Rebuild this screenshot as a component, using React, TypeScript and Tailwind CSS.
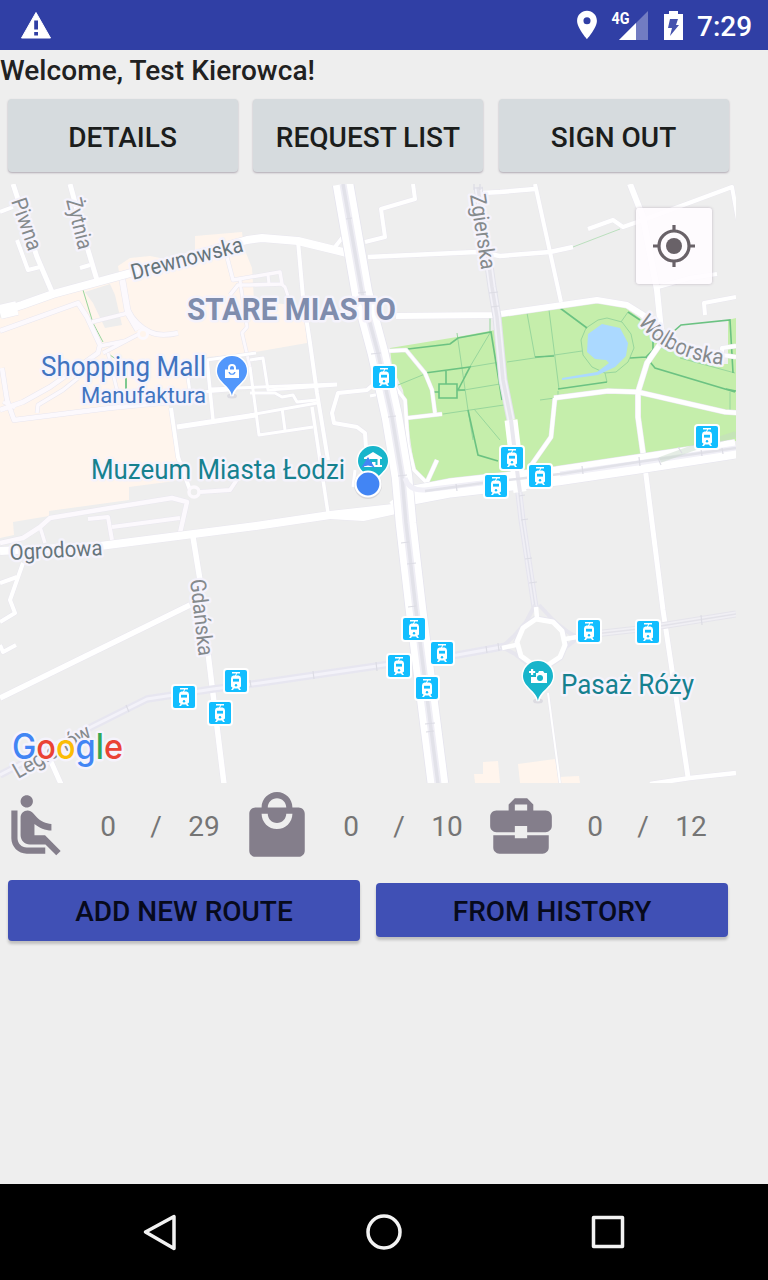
import React from "react";
import {
  MdAirlineSeatReclineNormal,
  MdBusinessCenter,
  MdLocalMall,
  MdLocationOn,
} from "react-icons/md";

const ROADS: [string, number][] = [
  // north-west
  ["M0 312L22 305L53 294L127 274L247 240L262 238L298 241L347 253", 8],
  ["M0 312L17 308", 14],
  ["M13 184L37 257L52 292", 5],
  ["M0 212L13 207", 4],
  ["M17 240L28 270L40 267", 4],
  ["M70 184L88 250L97 280", 5],
  ["M80 268L90 265", 4],
  // centre
  ["M335 247L346 233", 4],
  ["M413 184L415 199L381 209L385 237L365 242", 4],
  ["M298 241L303 297L310 343L317 393L328 460", 4],
  ["M312 407L320 460L328 513", 3.5],
  ["M368 257L477 252L500 256L550 252L573 247", 4.5],
  ["M482 193L500 192L535 189", 4.5],
  ["M535 184L550 252L561 302", 4],
  ["M396 316L493 315L500 314L597 300L627 305L643 315L663 334", 6],
  ["M630 184L643 217L657 290L662 340", 6],
  ["M588 229L613 220L623 227L643 220L732 187L738 220", 4],
  ["M658 287L690 278L717 274", 4],
  ["M705 315L704 303L736 297", 4],
  ["M736 346L722 348L722 355L736 357", 4],
  // blocks
  ["M207 360L256 353", 3],
  ["M250 360L263 358L268 390L337 385", 3],
  ["M188 378L190 393L228 390L230 378", 3],
  ["M207 360L213 420", 3.5],
  ["M210 389L337 384", 3],
  ["M250 367L259 435L313 427", 3],
  ["M177 427L256 415", 5],
  ["M250 415L317 403", 3],
  ["M250 393L275 393L282 397L293 395L297 402L317 400", 3],
  ["M282 408L285 430", 3],
  ["M171 408L178 457L190 490", 4],
  ["M373 385L367 390L338 393L332 413L334 423L357 427L365 433L366 448", 4],
  ["M370 396L380 394", 3],
  ["M355 470L353 487", 3],
  // south-west
  ["M0 551L100 546L256 526L330 515L393 508", 8],
  ["M330 515L363 517L400 509", 8],
  ["M193 537L200 580L208 653L224 784", 5.5],
  ["M0 698L190 605", 5.5],
  ["M23 563L10 600L15 613L0 622", 4],
  ["M0 583L17 577", 4],
  ["M0 645L3 652L16 645", 4],
  ["M48 755L61 784", 5],
  // south-east
  ["M645 467L663 610L688 777", 5],
  ["M650 784L690 778L736 773", 4.5],
  ["M548 693L560 783", 2],
];

const MALL_ROADS: [string, number][] = [
  ["M0 331L78 303L87 317L100 345L98 353L50 387L23 402L0 410", 4.5],
  ["M2 368L7 400L14 420L110 408L171 402", 4.5],
  ["M37 413L38 405L63 390L78 378", 3.5],
  ["M3 402L15 408", 3],
  ["M122 278L128 313L138 330", 6],
  ["M92 322L128 313", 3.5],
  ["M100 346L125 341L139 334L103 353", 3.5],
  ["M128 310Q135 325 150 332Q160 337 178 333", 4.5],
  ["M108 353L117 390", 3],
  ["M227 257L233 280L280 272L282 284L250 285L238 285L230 295", 3.5],
  ["M240 279L241 288L247 327L242 333L250 367", 3],
  ["M268 275L269 284", 3],
  ["M280 283L285 287L288 296", 3],
  ["M200 492L230 490L238 478", 4],
  ["M0 543L23 538L40 527L50 518L110 508L172 498L187 502L180 533", 4.5],
  ["M88 519L108 517L112 540", 4],
  ["M112 527L180 518", 4],
  ["M40 527L45 543", 3.5],
];

const PARK_ROADS: [string, number][] = [
  ["M388 351L406 350L425 373L432 390L435 413", 3.5],
  ["M407 418L442 414", 3.5],
  ["M427 482L437 460", 4],
  ["M396 388L405 400L408 445L414 470L427 483", 3.5],
  ["M554 398L608 391L638 392L690 404L725 412L738 413", 4.5],
  ["M555 398L551 437L530 467", 4],
  ["M638 470L645 467L638 417L638 392L647 363L663 340", 5],
];

const STOPS: [number, number][] = [
  [384, 377], [512, 458], [496, 486], [540, 476], [707, 437], [414, 629], [442, 653],
  [399, 666], [427, 688], [236, 681], [184, 697], [220, 713], [589, 631], [648, 632],
];

const MAIN = "M343 184L362 293L378 353L392 417L402 477L406 523L416 610L438 784";
const CROSS = "M408 496L450 488L557 476L638 464L736 449";
const ZGIERSKA_N = "M478 187L492 287L497 317L503 380L511 420";
const ZGIERSKA_S = "M518 485L522 520L535 607";
const LEG_W = "M0 775L93 726L147 699L213 689L260 683L377 666L417 660L457 655L507 646";
const LEG_E = "M570 638L603 633L648 628L736 614";

function TramStop({ x, y }: { x: number; y: number }) {
  return (
    <g transform={`translate(${x} ${y})`}>
      <rect x="-13" y="-13" width="26" height="26" rx="4" fill="#fff" />
      <rect x="-11" y="-11" width="22" height="22" rx="2" fill="#12beff" />
      <path d="M-4 -9H4V-7.6H1.3L0 -5.6H2.6Q5 -5.2 5 -2.5V5.5L3.4 6.8L5 9H3L2 7.6H-2L-3 9H-5L-3.4 6.8L-5 5.5V-2.5Q-5 -5.2 -2.6 -5.6H-1L0.2 -7.6H-4Z" fill="#fff" />
      <rect x="-3" y="-2.2" width="6" height="2.800" fill="#12beff" />
      <circle cx="0" cy="4.2" r="1.2" fill="#12beff" />
    </g>
  );
}

function Pin({ x, y, fill, children }: { x: number; y: number; fill: string; children?: React.ReactNode }) {
  return (
    <g transform={`translate(${x} ${y})`}>
      <ellipse cx="0" cy="25" rx="5" ry="2.500" fill="#d0ced8" opacity=".6" />
      <path d="M0 25C-1 15 -15 11 -15 0A15 15 0 1 1 15 0C15 11 1 15 0 25Z" fill={fill} stroke="#fff" strokeWidth="3" paintOrder="stroke" />
      {children}
    </g>
  );
}

function Roads({ list, color }: { list: [string, number][]; color: string }) {
  return (
    <>
      {list.map(([d, w], i) => (
        <path key={`e${i}`} d={d} stroke="#e9e7ef" strokeWidth={w + 1} />
      ))}
      {list.map(([d, w], i) => (
        <path key={i} d={d} stroke={color} strokeWidth={w} />
      ))}
    </>
  );
}

function CityMap() {
  return (
    <svg viewBox="0 184 736 599" className="block h-[599px] w-[736px]" fontFamily="Roboto, sans-serif">
      <rect y="184" width="736" height="599" fill="#eeeeee" />
      <g fill="#fff5ed">
        <path d="M0 318L50 298L120 278L118 266L130 258L150 256L165 259L195 252V236L242 232L244 248L252 268L254 300L290 305L305 323L307 343L250 353L207 357L208 372L188 374V400L168 402L178 457L188 478L167 482L129 487V500L49 511V516L13 522L14 535L0 538Z" />
        <path d="M474 774H483V762L498 761L500 783H475ZM518 764L555 759L558 777L579 776L580 783H520Z" />
      </g>
      <path d="M85 292L110 284L115 295L122 325L105 328L93 303ZM208 360L250 354L254 390L210 396Z" fill="#ededed" />
      <path d="M390 348L457 337L495 330L502 315L597 301L623 306L648 324L663 342L690 358L712 364L728 364V320L736 318V441L553 468L427 483L415 473L408 423L403 390L392 367Z" fill="#c5eeab" />
      <g fill="none" stroke="#98d69c" strokeWidth="1">
        <path d="M457 333L468 410L473 440M490 333L465 375M490 318V333M398 385L425 374M470 367L500 362M458 391L500 384M443 414L504 405M474 409L500 440M507 362L582 351M527 313L535 357M549 310L559 389M540 400L555 398M605 373L607 382M621 322L628 312M680 358L735 373M558 397V391M730 392V410" />
        <path d="M598 320L607 318L622 322L631 334L634 348L628 362L616 372L605 373L592 367L583 355L581 340L586 328Z" />
        <path d="M573 247L620 229" opacity=".6" />
        <path d="M83 290L93 323L103 342M110 355Q122 362 126 373V390" />
      </g>
      <path d="M126 378V389M408 349L450 344L458 338L491 332L502 400M425 373L470 367L458 390M439 384H457V398H439ZM446 370V384M457 390H465M434 392H439M468 410L478 455L498 461M560 308L587 328M628 312L640 320M673 332L681 325L730 320L733 373M630 358L646 357L653 350V338M646 357L655 368L735 392M558 389L607 382M535 357L554 356M726 389L736 391" fill="none" stroke="#6bc282" strokeWidth="1.6" />
      <path d="M602 324L620 328L628 343L626 356L615 367L598 375L562 380V378L597 372L609 363L606 360L595 359L587 352L588 334Z" fill="#abd9ff" />

      <g fill="none" strokeLinejoin="round">
        <Roads list={MALL_ROADS} color="#fcf9fd" />
        <Roads list={ROADS} color="#fff" />
        <circle cx="143" cy="334" r="4.5" stroke="#fcf9fd" strokeWidth="3" fill="#fff5ed" />
        <circle cx="194" cy="492" r="5" stroke="#fcf9fd" strokeWidth="3.5" fill="#eee" />
        <Roads list={PARK_ROADS} color="#fff" />

        <path d={LEG_W} stroke="#e7e6f0" strokeWidth="7.500" />
        <path d={LEG_W} stroke="#f3f2f9" strokeWidth="3" />
        <path d={LEG_E} stroke="#e5e4eb" strokeWidth="7" />
        <path d={LEG_E} stroke="#f0eff4" strokeWidth="5" />
        <path d={LEG_E} stroke="#e3e2e9" strokeWidth="1.4" />
        <path d={ZGIERSKA_N} stroke="#e2e2ea" strokeWidth="9" />
        <path d={ZGIERSKA_N} stroke="#f3f2f8" strokeWidth="7" />
        <path d={ZGIERSKA_N} stroke="#e5e4eb" strokeWidth="3.5" />
        <path d={ZGIERSKA_S} stroke="#e5e4ee" strokeWidth="7" />
        <path d={ZGIERSKA_S} stroke="#f0eff5" strokeWidth="5" />
        <path d={ZGIERSKA_S} stroke="#e2e2eb" strokeWidth="1.4" />

        <path d="M393 507L408 496M398 518L410 510" stroke="#fff" strokeWidth="12" />
        <path d={CROSS} stroke="#e5e4ee" strokeWidth="20" />
        <path d={CROSS} stroke="#fff" strokeWidth="19" />
        <path d={MAIN} stroke="#e5e4ee" strokeWidth="22" />
        <path d={MAIN} stroke="#fff" strokeWidth="20.5" />
        <path d="M511 420L514 445L518 478L520 492" stroke="#fff" strokeWidth="13" />
        <path d="M511 420L514 445L518 478L520 492" stroke="#e9e8ef" strokeWidth="4" />
        <path d={MAIN} stroke="#efeef5" strokeWidth="7" />
        <path d={MAIN} stroke="#e2e2e9" strokeWidth="3.5" />
        <path d="M405 478Q409 491 425 490L490 482M560 474L638 463L736 448" stroke="#f1f0f7" strokeWidth="5" />
        <path d="M425 491L490 482L560 474L638 462L736 448" stroke="#e2e2e9" strokeWidth="2.6" />
        <path d="M660 460L690 449L736 434" stroke="#c5d8c6" strokeWidth="6" opacity=".45" />
        <path d="M346 219L352 218M358 293L366 292M371 354L381 353M388 417L396 416M398 476L407 475M401 543L409 542M407 564L416 563M408 607L416 606M425 724L435 723M426 732L434 731M456 484L457 491M582 466L583 474M639 457L640 466M658 458L661 465M678 447L682 453M701 449L702 456M722 448L723 454M489 293L498 292M491 307L499 306M519 496L525 495M521 520L528 519M525 559L532 558M529 583L537 582M126 705L129 712M313 671L314 679M376 662L377 671M250 680L251 687M486 646L487 653M498 643L499 651M701 615L702 625M474 188H483M474 184V190M480 184V190" stroke="#dcdce4" strokeWidth="1.2" />

        <path d="M535 605L526 622L514 636L502 647L515 654L530 666M539 605L555 622L568 632L578 638L565 648L553 662" stroke="#e7e6ee" strokeWidth="4" />
        <path d="M536 619L553 622L562 631L565 645L560 657L548 665L532 664L521 656L517 642L523 628Z" stroke="#e7e6ee" strokeWidth="7" />
        <path d="M536 619L553 622L562 631L565 645L560 657L548 665L532 664L521 656L517 642L523 628Z" stroke="#fff" strokeWidth="5" fill="#eee" />
        <path d="M536 607L537 618M502 648L516 645M565 639L577 637" stroke="#fff" strokeWidth="4.5" />
      </g>

      {STOPS.map(([x, y]) => (
        <TramStop key={`${x}-${y}`} x={x} y={y} />
      ))}

      <Pin x={232} y={371} fill="#5297fb">
        <path d="M-7 -1.5H-4V-3A4 4 0 0 1 4 -3V-1.5H7V7H-7Z" fill="#fff" />
        <path d="M-2 -1.5V-3A2 2 0 0 1 2 -3V-1.5ZM-3.6 1H-2.2A2.3 2.3 0 0 0 2.2 1H3.6A3.7 3.7 0 0 1 -3.6 1Z" fill="#5297fb" />
      </Pin>
      <Pin x={373} y={461} fill="#18b5cb">
        <path d="M0 -9L9 -3.5V-2H7V4H9V6H-9V4H-6V-2H-9V-3.5Z" fill="#fff" />
        <path d="M-3.5 -2H4.5V4H2.5V1H-1V4H-3.5Z" fill="#18b5cb" />
      </Pin>
      <path d="M361 468Q368 463 375 468L368 457Z" fill="#4285f4" />
      <circle cx="368" cy="485" r="14" fill="#8d8a98" opacity=".22" />
      <circle cx="368" cy="484" r="12.500" fill="#4285f4" stroke="#fff" strokeWidth="2.2" />
      <Pin x={538} y={676} fill="#18b5cb">
        <path d="M-7 1H-2V-3H0L1 -5H5L6.500 -3H9V7H-7Z" fill="#fff" />
        <circle cx="2" cy="2" r="3" fill="#18b5cb" />
        <path d="M-7 -7H-4.800V-5H-2.800V-3H-4.800V-1H-7V-3H-9V-5H-7Z" fill="#fff" />
      </Pin>

      <g paintOrder="stroke" stroke="#f5f3fc" strokeWidth="5" strokeLinejoin="round">
        <g fill="#858a8d" fontSize="22">
          <text transform="translate(11 201) rotate(71)" textLength="54" lengthAdjust="spacingAndGlyphs">Piwna</text>
          <text transform="translate(66 200) rotate(76)" textLength="52" lengthAdjust="spacingAndGlyphs">Żytnia</text>
          <text transform="translate(470 195) rotate(81.500)" textLength="76" lengthAdjust="spacingAndGlyphs">Zgierska</text>
          <text transform="translate(190 580) rotate(83.500)" textLength="77" lengthAdjust="spacingAndGlyphs">Gdańska</text>
          <path id="wolborska" d="M638 322C650 341 680 361 726 365" fill="none" stroke="none" />
          <text textLength="98" lengthAdjust="spacingAndGlyphs">
            <textPath href="#wolborska">Wolborska</textPath>
          </text>
          <text transform="translate(18 779) rotate(-29.500)" textLength="86" lengthAdjust="spacingAndGlyphs">Legionów</text>
        </g>
        <g fill="#66757b" fontSize="22">
          <text transform="translate(133 280) rotate(-14.500)" textLength="115" lengthAdjust="spacingAndGlyphs">Drewnowska</text>
          <text transform="translate(10 560) rotate(-3)" textLength="93" lengthAdjust="spacingAndGlyphs">Ogrodowa</text>
        </g>
        <text x="187" y="320" fontSize="31" fontWeight="700" fill="#7f8dad" textLength="209" lengthAdjust="spacingAndGlyphs">STARE MIASTO</text>
        <g fill="#4174c0">
          <text x="41" y="376" fontSize="27" textLength="165" lengthAdjust="spacingAndGlyphs">Shopping Mall</text>
          <text x="81" y="403" fontSize="22" textLength="125" lengthAdjust="spacingAndGlyphs">Manufaktura</text>
        </g>
        <g fill="#16818f" fontSize="27">
          <text x="91" y="479" textLength="254" lengthAdjust="spacingAndGlyphs">Muzeum Miasta Łodzi</text>
          <text x="561" y="694" textLength="133" lengthAdjust="spacingAndGlyphs">Pasaż Róży</text>
        </g>
        <text x="12" y="759" fontFamily="Inter, sans-serif" fontSize="35" fontWeight="500" textLength="111" lengthAdjust="spacingAndGlyphs">
          <tspan fill="#4285f4">G</tspan>
          <tspan fill="#ea4335">o</tspan>
          <tspan fill="#fbbc05">o</tspan>
          <tspan fill="#4285f4">g</tspan>
          <tspan fill="#34a853">l</tspan>
          <tspan fill="#ea4335">e</tspan>
        </text>
      </g>
    </svg>
  );
}

function StatusBar() {
  return (
    <header className="flex h-[50px] shrink-0 items-center bg-[#303fa5] pr-[16px] pl-[20px] text-white">
      <svg viewBox="0 0 32 28" className="h-[28px] w-[32px]">
        <path d="M16 1.500L30.500 27H1.500Z" fill="#fff" stroke="#fff" strokeLinejoin="round" />
        <path d="M14.200 9.500H18V18.500H14.200ZM14.200 21H18V24.500H14.200Z" fill="#303fa5" />
      </svg>
      <div className="ml-auto flex items-center">
        <MdLocationOn className="size-[34px]" />
        <svg viewBox="0 0 40 34" className="ml-[6px] h-[34px] w-[40px]">
          <path d="M38 3V32H9Z" fill="#fff" opacity=".32" />
          <path d="M26 15V32H9Z" fill="#fff" />
          <text x="1.500" y="15.500" fill="#fff" fontFamily="Roboto, sans-serif" fontWeight="700" fontSize="16.500" textLength="18" lengthAdjust="spacingAndGlyphs">4G</text>
        </svg>
        <svg viewBox="0 0 19 29" className="ml-[14px] h-[29px] w-[19px]">
          <path d="M5 0H14V3H19V29H0V3H5Z" fill="#fff" />
          <path d="M6 8H14L12 14H15L6 25L8 17H4Z" fill="#4553ae" />
        </svg>
        <span className="ml-[14px] w-[55px] pt-[3px] text-[28px] leading-[33px] font-medium">7:29</span>
      </div>
    </header>
  );
}

const COUNTERS = [
  { Icon: MdAirlineSeatReclineNormal, used: 0, total: 29, icon: "-ml-px mr-[12px]", digits: "-ml-px" },
  { Icon: MdLocalMall, used: 0, total: 10, icon: "-ml-[2px] mr-[13px]", digits: "" },
  { Icon: MdBusinessCenter, used: 0, total: 12, icon: "mr-[13px]", digits: "" },
];

export default function App() {
  return (
    <div className="flex h-[1280px] w-[768px] flex-col overflow-hidden bg-[#eeeeee] font-['Roboto',sans-serif]">
      <StatusBar />
      <main className="flex flex-1 flex-col">
        <h1 className="h-[49px] pt-[4px] text-[28px] leading-[33px] font-medium tracking-[0.07px] text-[#212121]">Welcome, Test Kierowca!</h1>
        <div className="flex gap-[15.5px] pl-[7.5px]">
          {["DETAILS", "REQUEST LIST", "SIGN OUT"].map((label) => (
            <button key={label} className="h-[73px] w-[230px] rounded-[4px] bg-[#d6dbde] pt-[5px] text-[28px] font-medium text-[#1b1d1c] shadow-[0_1px_2px_rgba(60,40,70,0.35)]">
              {label}
            </button>
          ))}
        </div>
        <section className="relative mt-[12px] h-[599px] w-[736px]">
          <CityMap />
          <button aria-label="My location" className="absolute top-[24px] right-[24px] flex size-[76px] items-center justify-center rounded-[3px] bg-[#fffcff]/90 shadow-[0_0_3px_rgba(80,50,90,0.3)]">
            <svg viewBox="0 0 42 42" className="size-[42px]" fill="none" stroke="#696268">
              <circle cx="21" cy="21" r="15" strokeWidth="3.200" />
              <circle cx="21" cy="21" r="8" fill="#696268" stroke="none" />
              <path d="M21 0V6M21 36V42M0 21H6M36 21H42" strokeWidth="3.200" />
            </svg>
          </button>
        </section>
        <div className="mt-[6px] flex h-[75px] items-start">
          {COUNTERS.map(({ Icon, used, total, icon, digits }) => (
            <div key={total} className="flex w-[242px] shrink-0 items-center text-[28px] text-[#757575]">
              <Icon className={`size-[74px] shrink-0 text-[#847e8b] ${icon}`} />
              <div className={`flex pt-px ${digits}`}>
                <span className="w-[48px] text-center">{used}</span>
                <span className="w-[48px] text-center">/</span>
                <span className="w-[48px] text-center">{total}</span>
              </div>
            </div>
          ))}
        </div>
        <div className="mt-[16px] flex items-start gap-[16px] pl-[8px] text-[28px] font-medium text-[#070a1c]">
          <button className="h-[61px] w-[352px] rounded-[4px] bg-[#4050b5] pt-[2px] shadow-[0_3px_3px_rgba(0,0,0,0.2)]">ADD NEW ROUTE</button>
          <button className="mt-[3px] h-[54px] w-[352px] rounded-[4px] bg-[#4050b5] pt-[3px] shadow-[0_3px_3px_rgba(0,0,0,0.2)]">FROM HISTORY</button>
        </div>
      </main>
      <nav className="flex h-[96px] shrink-0 items-center justify-between bg-black px-[140px]">
        <svg viewBox="0 0 40 40" className="size-[40px]" fill="none" stroke="#f2f2f2" strokeWidth="3.500" strokeLinejoin="round">
          <path d="M5.500 20L34 4.500V36.500Z" />
        </svg>
        <svg viewBox="0 0 40 40" className="size-[40px]" fill="none" stroke="#f2f2f2" strokeWidth="3.500">
          <circle cx="20" cy="20" r="16" />
        </svg>
        <svg viewBox="0 0 40 40" className="size-[40px]" fill="none" stroke="#f2f2f2" strokeWidth="3.500" strokeLinejoin="round">
          <rect x="5.500" y="5.500" width="29" height="29" />
        </svg>
      </nav>
    </div>
  );
}
